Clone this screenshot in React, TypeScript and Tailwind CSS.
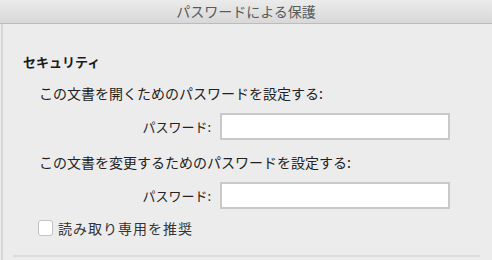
import React from "react";

const font = { fontFamily: '"Noto Sans CJK JP", "Noto Sans", sans-serif' };

function PasswordRow() {
  return (
    <div className="flex h-[27px] items-center">
      <div className="w-[208px] text-right text-[13px] leading-[20px] text-[#222]">パスワード:</div>
      <input
        type="password"
        className="ml-[9px] h-[27px] w-[230px] border-2 border-[#c9c9c9] bg-white outline-none"
      />
    </div>
  );
}

export default function App() {
  return (
    <div className="h-[260px] w-[492px] overflow-hidden bg-[#ececec]" style={font}>
      <div className="flex h-[24px] items-center justify-center border-b border-[#bcbcbc] bg-gradient-to-b from-[#ebebeb] to-[#d8d8d8] text-[14px] text-[#5a5a5a]">
        パスワードによる保護
      </div>
      <div className="ml-[1px] h-[236px] border-l-2 border-[#d6d6d6]">
        <div className="pl-[20px] pt-[28px] text-[13px] font-bold leading-[20px] text-[#1a1a1a]">セキュリティ</div>
        <div className="mt-[11px] pl-[36px] text-[14px] leading-[20px] text-[#222]">
          この文書を開くためのパスワードを設定する:
        </div>
        <div className="mt-[10px]">
          <PasswordRow />
        </div>
        <div className="mt-[12px] pl-[36px] text-[14px] leading-[20px] text-[#222]">
          この文書を変更するためのパスワードを設定する:
        </div>
        <div className="mt-[10px]">
          <PasswordRow />
        </div>
        <label className="mt-[11px] flex h-[16px] items-center pl-[35px]">
          <span className="h-[16px] w-[15px] rounded-[3px] border border-[#c2c2c2] bg-white" />
          <span className="ml-[5px] text-[14px] leading-[20px] tracking-[1px] text-[#333]">読み取り専用を推奨</span>
        </label>
        <div className="ml-[10px] mt-[19px] h-[2px] w-[467px] bg-[#dcdcdc]" />
      </div>
    </div>
  );
}
